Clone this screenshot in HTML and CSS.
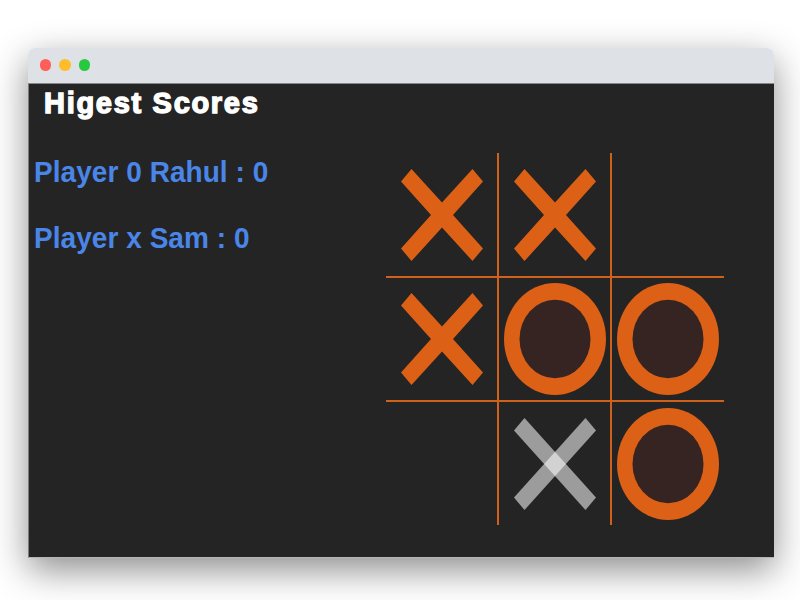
FILE: index.html
```html
<!DOCTYPE html>
<html lang="en">
<head>
  <meta charset="UTF-8">
  <title>Tic Tac Toe</title>
  <link rel="stylesheet" href="styles.css">
</head>
<body>
  <div class="window">
    <div class="title-bar">
      <span class="dot red"></span>
      <span class="dot yellow"></span>
      <span class="dot green"></span>
    </div>
    <div class="content">
      <div class="scores">
        <h1>Higest Scores</h1>
        <p class="score first">Player 0 Rahul : 0</p>
        <p class="score">Player x Sam : 0</p>
      </div>
      <div class="board">
        <div class="cell">
          <svg viewBox="-52 -57 104 114"><polygon class="x" points="-41,-33.6 -30.5,-46 0,-12.6 30.5,-46 41,-33.6 11,0 41,33.6 30.5,46 0,12.6 -30.5,46 -41,33.6 -11,0"/></svg>
        </div>
        <div class="cell">
          <svg viewBox="-52 -57 104 114"><polygon class="x" points="-41,-33.6 -30.5,-46 0,-12.6 30.5,-46 41,-33.6 11,0 41,33.6 30.5,46 0,12.6 -30.5,46 -41,33.6 -11,0"/></svg>
        </div>
        <div class="cell"></div>
        <div class="cell">
          <svg viewBox="-52 -57 104 114"><polygon class="x" points="-41,-33.6 -30.5,-46 0,-12.6 30.5,-46 41,-33.6 11,0 41,33.6 30.5,46 0,12.6 -30.5,46 -41,33.6 -11,0"/></svg>
        </div>
        <div class="cell">
          <svg viewBox="-52 -57 104 114"><ellipse class="o" cx="0" cy="0" rx="51" ry="56"/><ellipse class="o-hole" cx="0" cy="0" rx="35.5" ry="39.3"/></svg>
        </div>
        <div class="cell">
          <svg viewBox="-52 -57 104 114"><ellipse class="o" cx="0" cy="0" rx="51" ry="56"/><ellipse class="o-hole" cx="0" cy="0" rx="35.5" ry="39.3"/></svg>
        </div>
        <div class="cell"></div>
        <div class="cell">
          <svg viewBox="-52 -57 104 114">
            <polygon class="ghost" points="-41,-33.6 -30.5,-46 41,33.6 30.5,46"/>
            <polygon class="ghost" points="30.5,-46 41,-33.6 -30.5,46 -41,33.6"/>
          </svg>
        </div>
        <div class="cell">
          <svg viewBox="-52 -57 104 114"><ellipse class="o" cx="0" cy="0" rx="51" ry="56"/><ellipse class="o-hole" cx="0" cy="0" rx="35.5" ry="39.3"/></svg>
        </div>
      </div>
    </div>
  </div>
</body>
</html>
```

FILE: styles.css
```css
body {
  margin: 0;
  padding: 48px 26px 42px 28px;
  background-color: #fff;
  font-family: "Liberation Sans", Arial, sans-serif;
}
.window {
  height: 510px;
  display: flex;
  flex-direction: column;
  border-radius: 7px 7px 0 0;
  overflow: hidden;
  box-shadow: 0 12px 36px rgba(0, 0, 0, 0.45);
}
.title-bar {
  height: 36px;
  box-sizing: border-box;
  flex-shrink: 0;
  display: flex;
  align-items: center;
  gap: 8px;
  padding: 0 0 1px 12px;
  background-color: #dee1e6;
  border-bottom: 1px solid #85878a;
}
.dot {
  width: 11.4px;
  height: 11.4px;
  border-radius: 50%;
}
.red {
  background-color: #ff5f57;
}
.yellow {
  background-color: #ffbd2e;
}
.green {
  background-color: #28c840;
}
.content {
  flex: 1;
  display: flex;
  justify-content: space-between;
  padding: 0 50px 32px 5px;
  background-color: #242424;
  border-left: 1px solid #7d7d7d;
  border-bottom: 1px solid #b5b5b5;
}
.scores h1 {
  margin: 3px 0 0 10px;
  font-size: 29px;
  line-height: 32px;
  letter-spacing: 1.7px;
  color: #fff;
  -webkit-text-stroke: 1.4px #fff;
}
.score {
  margin: 34px 0 0;
  font-size: 28px;
  line-height: 32px;
  letter-spacing: 0.05px;
  font-weight: bold;
  color: #4a86e8;
  transform: scaleY(1.08);
}
.score.first {
  margin-top: 37px;
}
.board {
  width: 338px;
  margin-top: 69px;
  display: grid;
  grid-template-columns: 113px 113px 112px;
  grid-template-rows: 125px 124px 123px;
}
.cell {
  display: flex;
  align-items: center;
  justify-content: center;
  border-right: 2px solid #cf611b;
  border-bottom: 2px solid #cf611b;
}
.cell:nth-child(3n) {
  border-right: none;
}
.cell:nth-child(n+7) {
  border-bottom: none;
}
.cell svg {
  width: 104px;
  height: 114px;
}
.x,
.o {
  fill: #dc6016;
}
.o-hole {
  fill: #352422;
}
.ghost {
  fill: rgba(255, 255, 255, 0.55);
}
```
